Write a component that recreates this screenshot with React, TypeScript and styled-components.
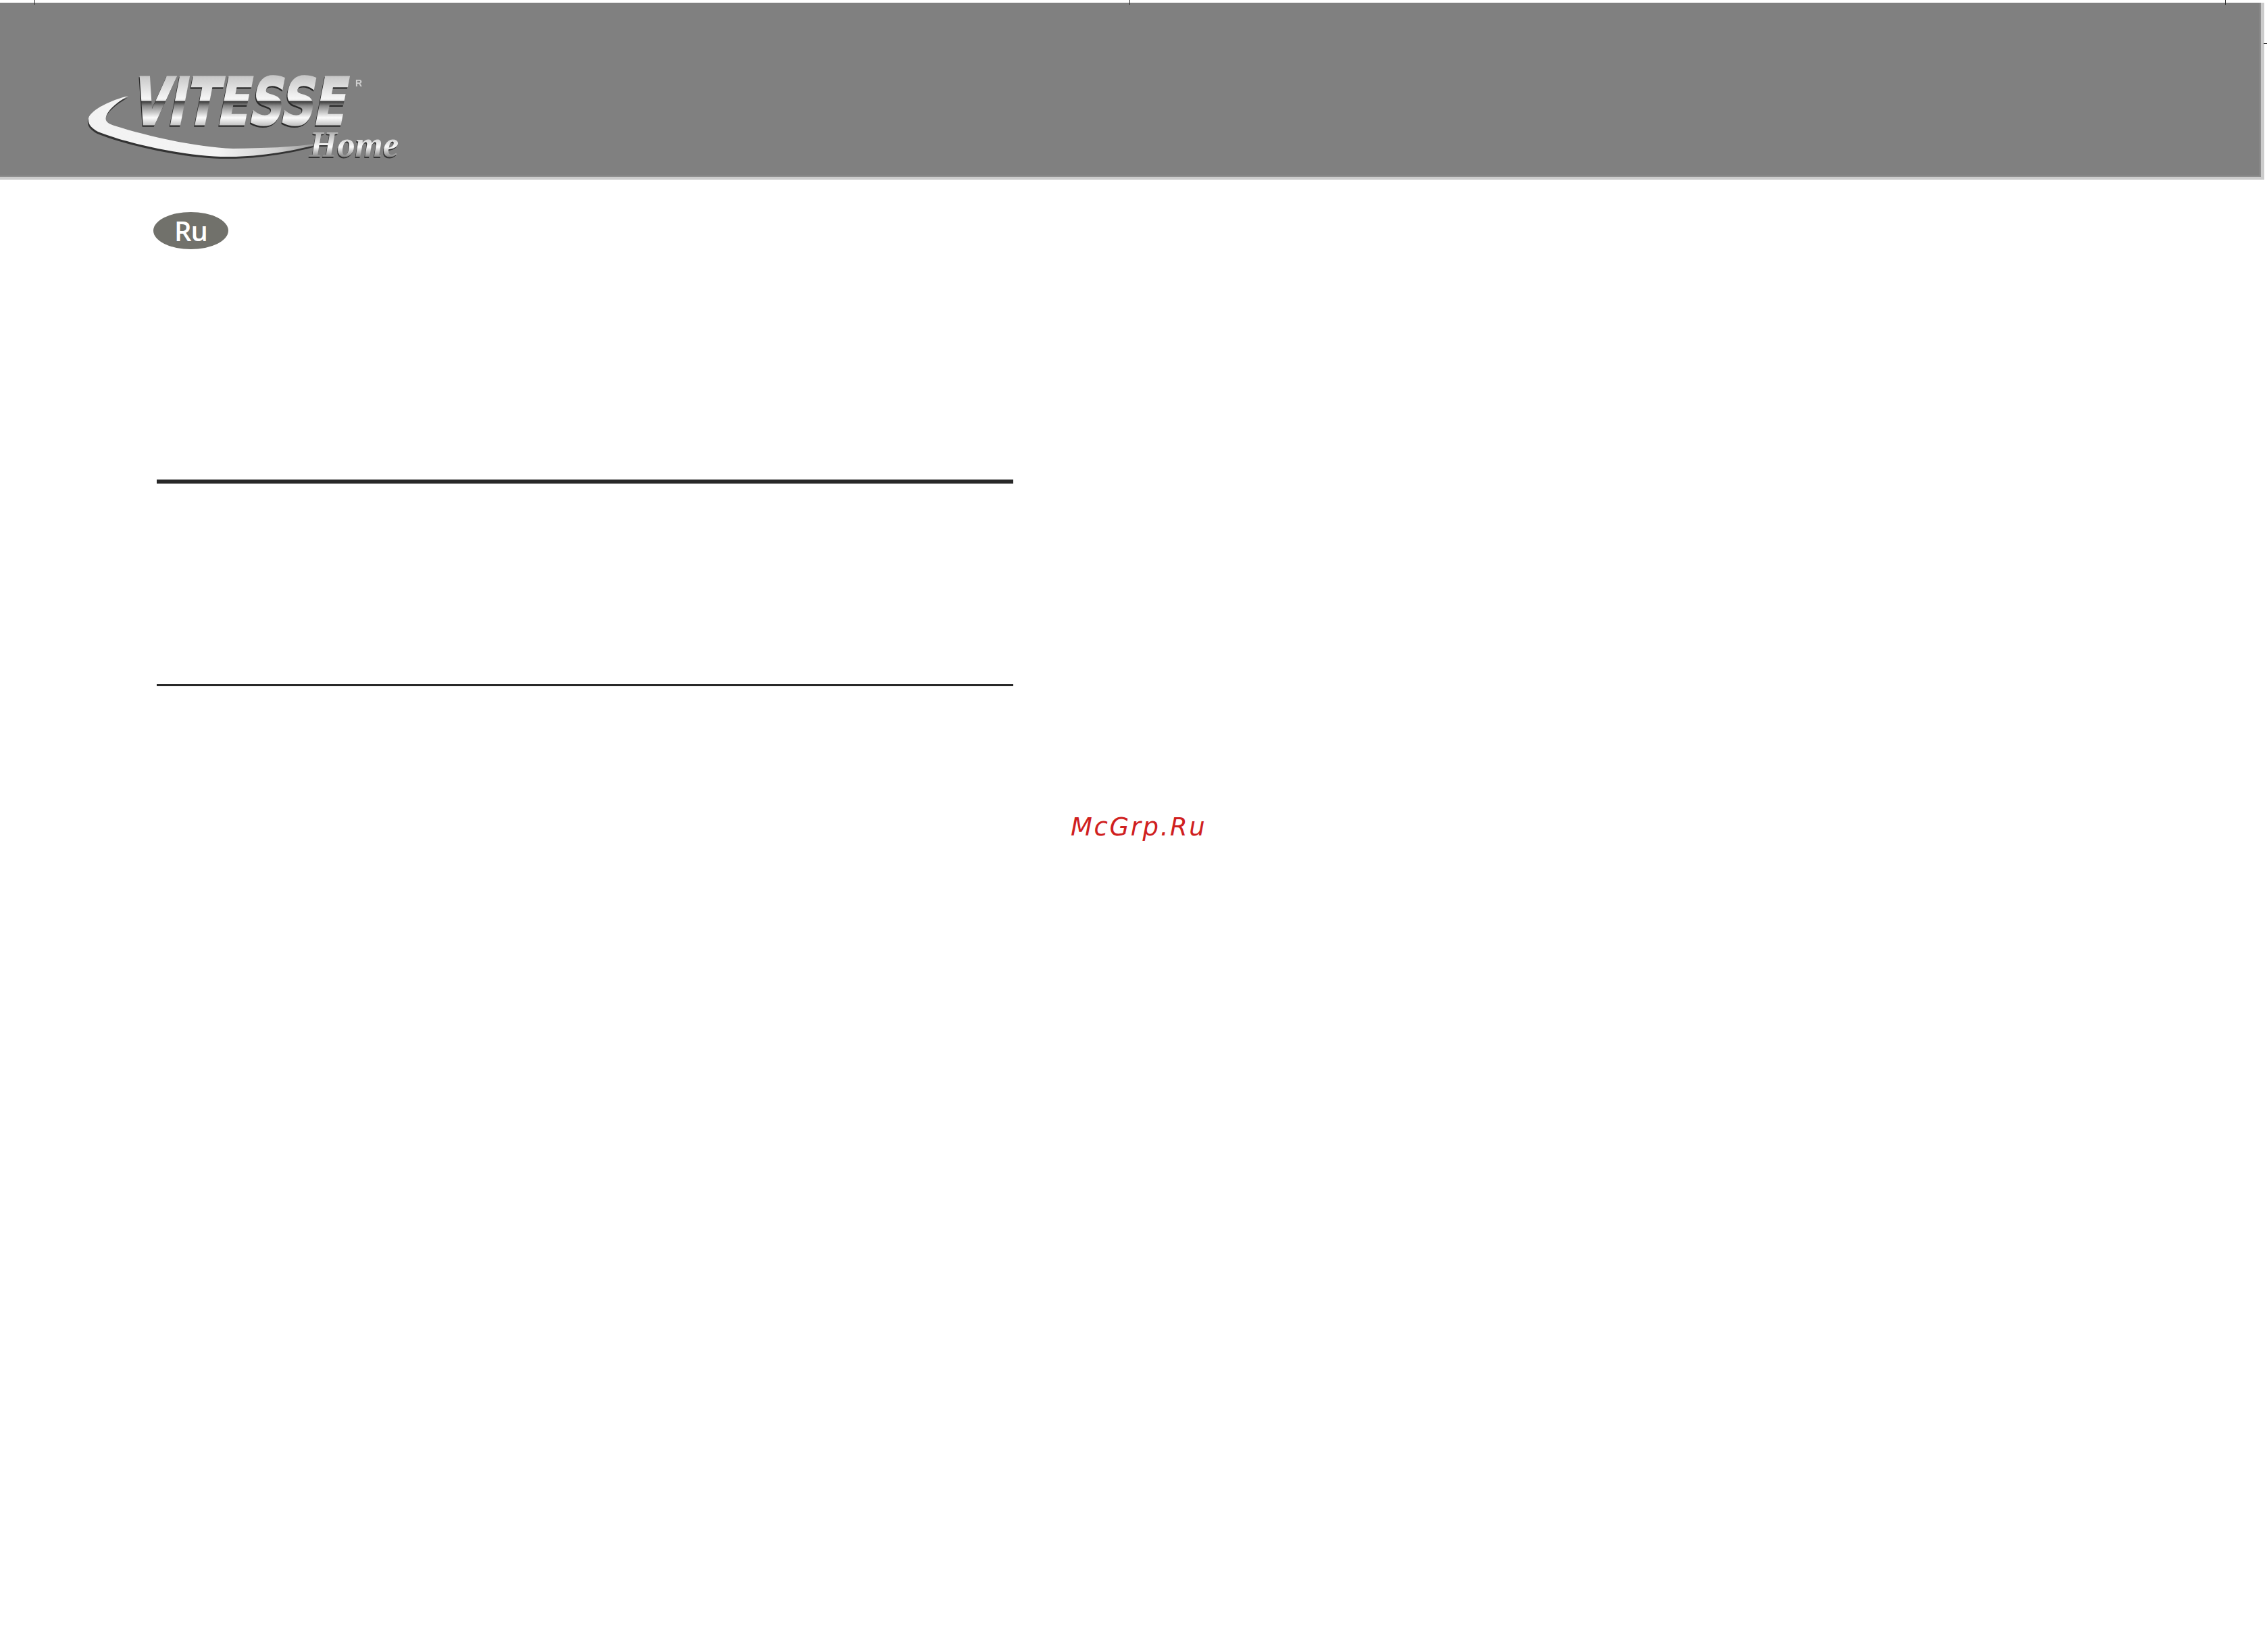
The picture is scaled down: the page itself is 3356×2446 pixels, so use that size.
import React from "react";
import styled, { createGlobalStyle } from "styled-components";

const Global = createGlobalStyle`
  html, body { margin: 0; padding: 0; background: #fff; }
`;

const Page = styled.div`
  position: relative;
  width: 3356px;
  height: 2446px;
  overflow: hidden;
  padding-top: 4px;
  box-sizing: border-box;
  background: #fff;
`;

const Tick = styled.i<{ $x: number }>`
  position: absolute;
  top: 0;
  left: ${(p) => p.$x}px;
  width: 1px;
  height: 7px;
  background: #2a2a2a;
`;

const SideTick = styled.i`
  position: absolute;
  top: 64px;
  right: 0;
  width: 5px;
  height: 1px;
  background: #2a2a2a;
`;

const Banner = styled.header`
  box-sizing: border-box;
  width: 3352px;
  height: 262px;
  padding: 96px 0 0 120px;
  background: #808080;
  border-right: 5px solid #cccccc;
  border-bottom: 4px solid #cccccc;
  box-shadow: inset -2px -2px 0 #8e8e8e;
`;

const Logo = styled.svg`
  display: block;
  width: 490px;
  height: 150px;
  overflow: visible;
  filter: blur(0.6px);
`;

const Content = styled.main`
  display: flex;
  flex-direction: column;
  align-items: flex-start;
  padding: 48px 0 0 232px;
`;

const Badge = styled.div`
  display: flex;
  align-items: center;
  justify-content: center;
  width: 111px;
  height: 55px;
  margin-left: -5px;
  border-radius: 50%;
  background: #71716b;
  color: #fff;
  font-family: "Open Sans", sans-serif;
  font-weight: 600;
  font-size: 40px;
  letter-spacing: -1px;
  line-height: 1;
`;

const Rule = styled.hr<{ $weight: number; $top: number }>`
  width: 1268px;
  height: ${(p) => p.$weight}px;
  margin: ${(p) => p.$top}px 0 0;
  border: 0;
  background: #282828;
`;

const Watermark = styled.div`
  margin: 187px 0 0 1353px;
  color: #d02020;
  font-family: "DejaVu Sans", sans-serif;
  font-style: italic;
  font-size: 37px;
  line-height: 44px;
  letter-spacing: 2.6px;
  white-space: nowrap;
`;

const sweep =
  "M190 142 C165 148 135 162 131 175 C130 183 134 189 145 195 C190 213 280 233 341 232 C385 232 440 223 479 211 C430 219 390 219 345 220 C290 218 220 202 169 186 C160 183 155 180 157 173 C160 162 175 150 190 142 Z";

export default function App() {
  return (
    <Page>
      <Global />
      <Tick $x={51} />
      <Tick $x={1672} />
      <Tick $x={3294} />
      <SideTick />
      <Banner>
        <Logo viewBox="120 100 490 150" aria-label="Vitesse Home logo">
          <defs>
            <linearGradient id="word" gradientUnits="userSpaceOnUse" x1="0" y1="-71" x2="0" y2="2">
              <stop offset="0" stopColor="#c8c8c8" />
              <stop offset="0.45" stopColor="#f6f6f6" />
              <stop offset="0.49" stopColor="#e8e8e8" />
              <stop offset="0.51" stopColor="#3c3c3c" />
              <stop offset="0.6" stopColor="#8a8a8a" />
              <stop offset="0.84" stopColor="#fcfcfc" />
              <stop offset="1" stopColor="#c0c0c0" />
            </linearGradient>
            <linearGradient id="sweep" gradientUnits="userSpaceOnUse" x1="131" y1="0" x2="479" y2="0">
              <stop offset="0" stopColor="#f2f2f2" />
              <stop offset="0.55" stopColor="#f4f4f4" />
              <stop offset="0.8" stopColor="#d0d0d0" />
              <stop offset="1" stopColor="#8a8a8a" />
            </linearGradient>
            <linearGradient id="home" gradientUnits="userSpaceOnUse" x1="0" y1="-39" x2="0" y2="2">
              <stop offset="0" stopColor="#a8a8a8" />
              <stop offset="0.6" stopColor="#fafafa" />
              <stop offset="1" stopColor="#777" />
            </linearGradient>
          </defs>
          <path d={sweep} fill="#333" transform="translate(-1 3)" />
          <path d={sweep} fill="url(#sweep)" />
          <g fontFamily="'DejaVu Sans', sans-serif" fontWeight="700" fontSize="96">
            <text transform="translate(193 186) skewX(-11) scale(0.715 1)" fill="#2a2a2a" stroke="#2a2a2a" strokeWidth="3.5">
              VITESSE
            </text>
            <text transform="translate(194 184) skewX(-11) scale(0.715 1)" fill="url(#word)" stroke="url(#word)" strokeWidth="3">
              VITESSE
            </text>
          </g>
          <text x="526" y="128" fontFamily="'Liberation Sans', sans-serif" fontWeight="700" fontSize="14" fill="#cfcfcf">
            R
          </text>
          <g fontFamily="'Liberation Serif', serif" fontStyle="italic" fontWeight="700" fontSize="54">
            <text transform="translate(457 234) scale(0.98 1)" fill="#333">Home</text>
            <text transform="translate(458 232) scale(0.98 1)" fill="url(#home)">Home</text>
          </g>
        </Logo>
      </Banner>
      <Content>
        <Badge>Ru</Badge>
        <Rule $weight={6} $top={341} />
        <Rule $weight={3} $top={297} />
        <Watermark>McGrp.Ru</Watermark>
      </Content>
    </Page>
  );
}
